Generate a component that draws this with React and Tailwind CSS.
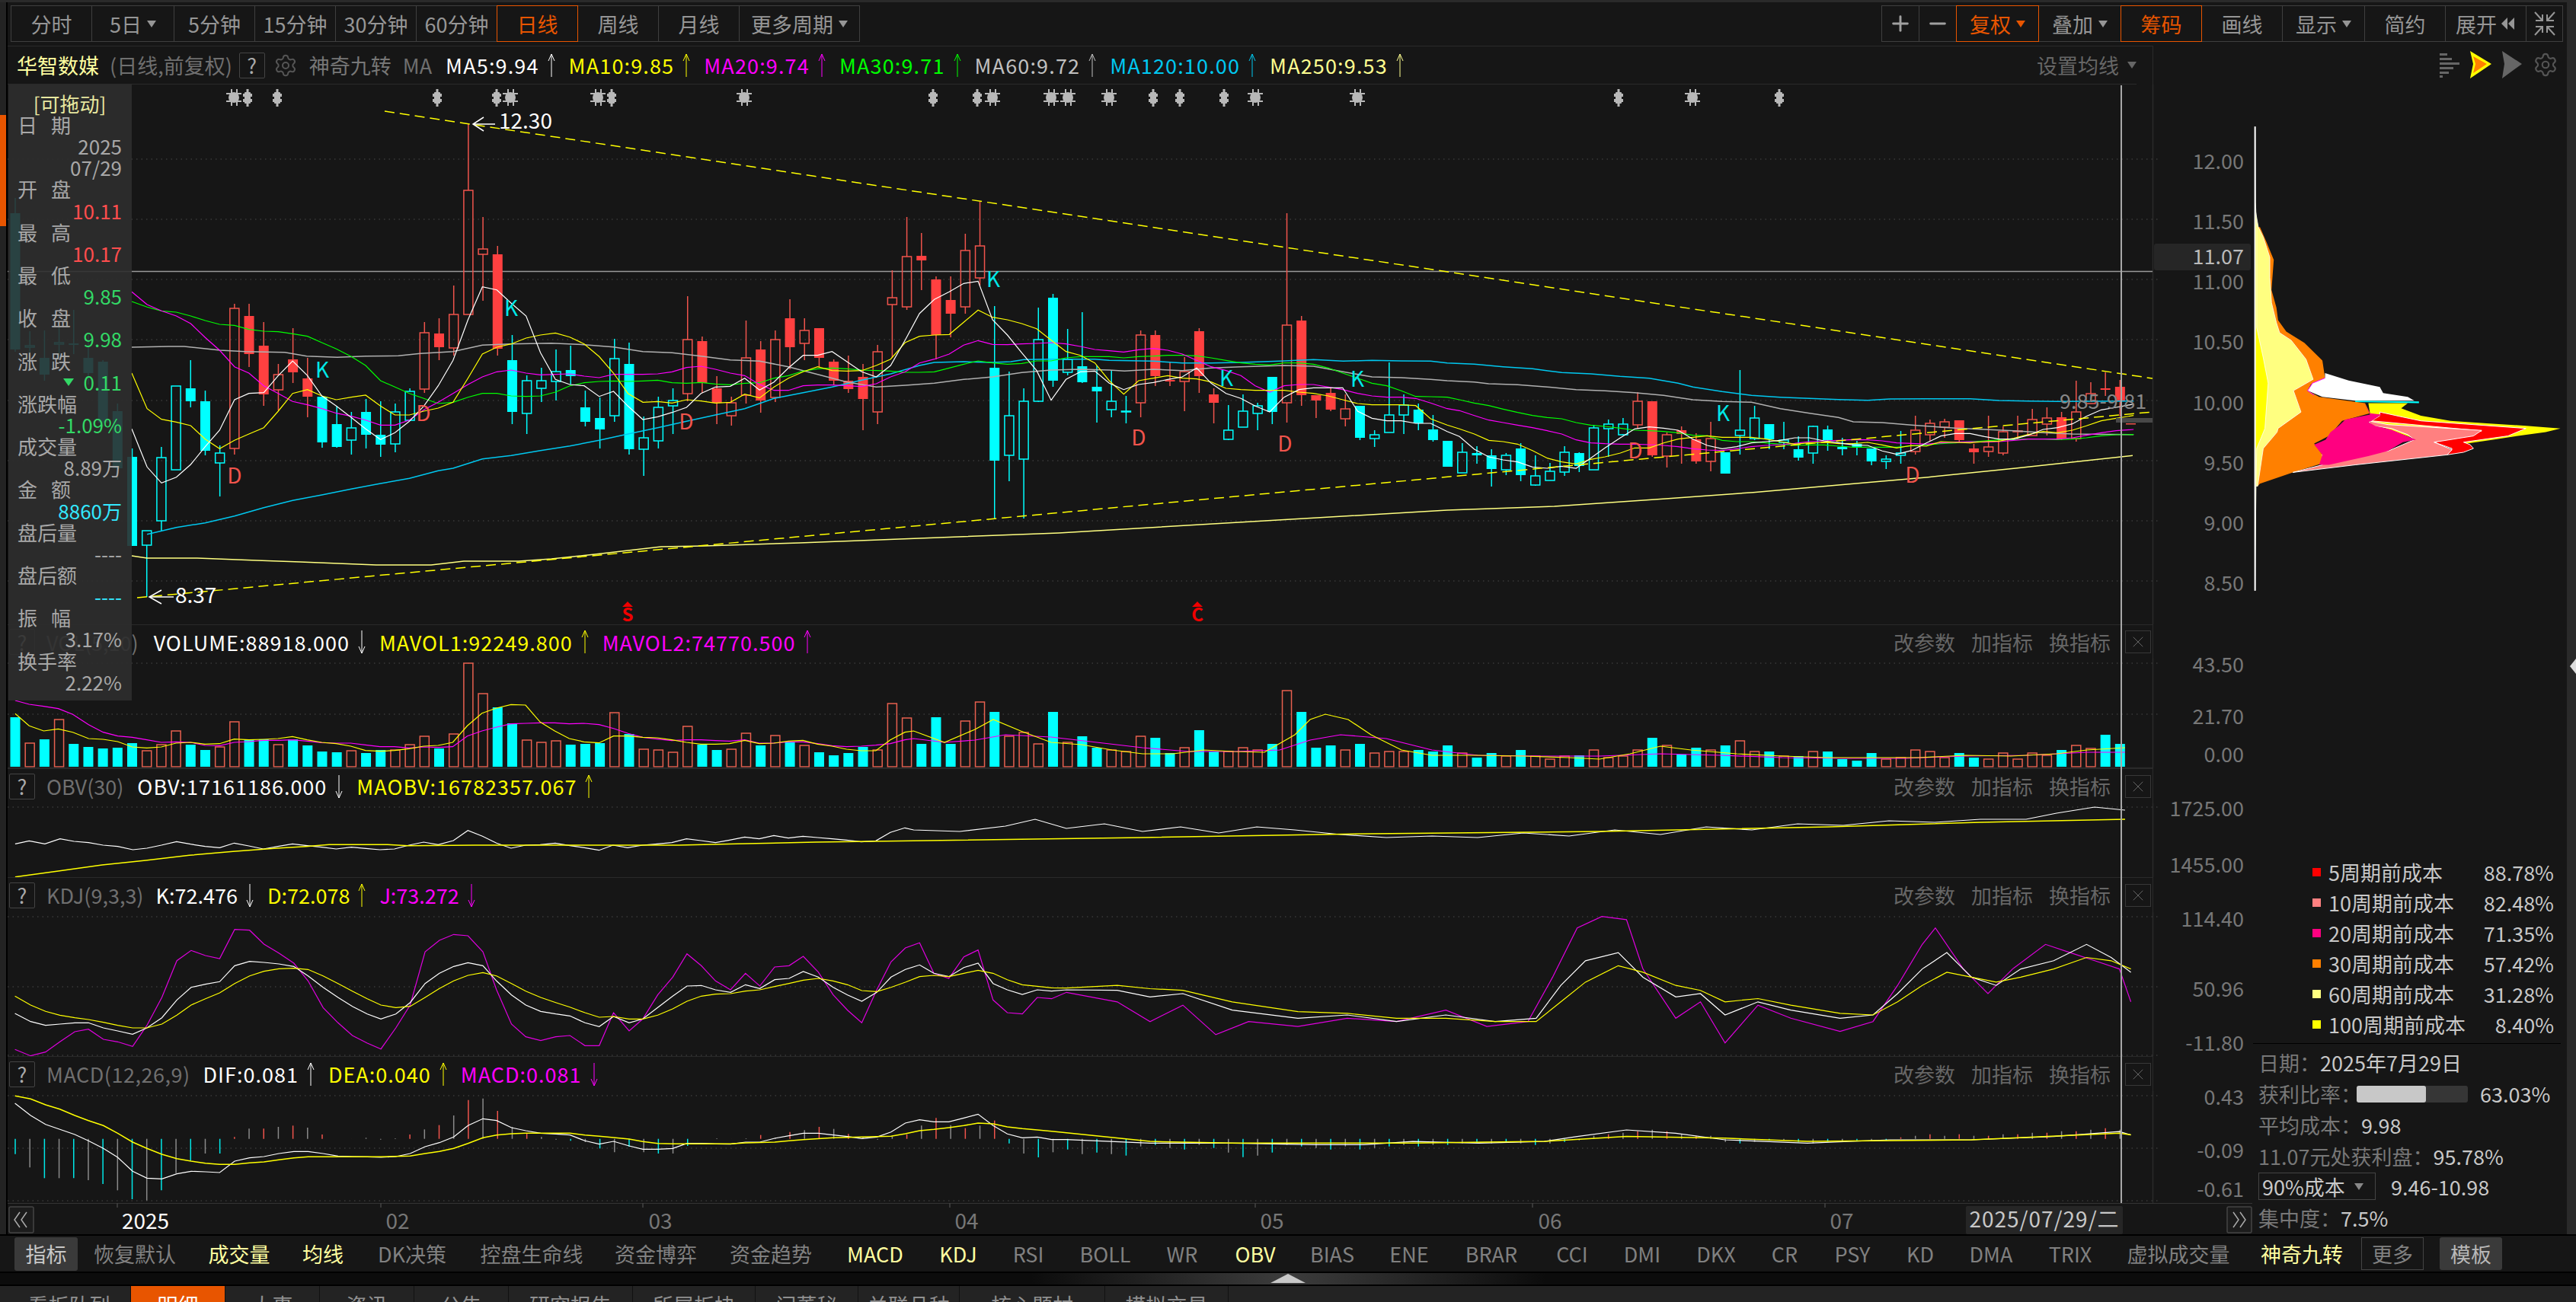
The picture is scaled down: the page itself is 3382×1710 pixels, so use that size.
import { Settings, X, Plus, Minus } from "lucide-react"

const conv = (s, ox, sx, oy, sy) =>
  s.trim().split(/\s+/).map(p => {
    const [a, b] = p.split(",")
    return (ox + a * sx).toFixed(1) + "," + (oy + b * sy).toFixed(1)
  }).join(" ")
const z8 = s => conv(s, 150, 0.574, 320, 1 / 3)
const z10 = s => conv(s, 1000, 0.574, 250, 1 / 3)
const z11 = s => conv(s, 1900, 0.574, 400, 1 / 3)
const z9 = s => conv(s, 0, 0.765, 820, 1 / 3)
const z12 = s => conv(s, 0, 0.893, 1150, 1 / 3)
const thumb = s => conv(s, 0, 2.157, 0, 2.157)
const chip = s => conv(s, 2700, 0.435, 300, 1 / 3)
const xi = i => 20 + 19.19 * i

const candles = [
  ["c",280,459,260,462],["o",454,456,435,476],["c",470,492,434,500],["o",450,452,430,470],["c",451,453,407,465],
  ["c",470,490,440,505],["c",475,555,473,560],["c",540,615,530,630],["c",600,717,589,717],["o",697,716,697,784],
  ["o",601,684,587,698],["o",507,617,507,617],["c",510,527,473,535],["c",527,592,513,598],["o",595,608,585,652],
  ["h",405,589,399,597],["f",415,465,399,482],["f",454,518,423,533],["h",492,512,478,539],["f",472,489,431,503],
  ["f",497,521,470,548],["c",521,581,521,588],["c",557,587,533,588],["o",562,578,541,597],["c",541,571,524,589],
  ["c",571,584,527,600],["o",541,583,530,594],["o",514,552,510,553],["h",437,511,423,516],["f",438,456,418,473],
  ["h",413,457,375,467],["h",250,413,163,413],["h",327,334,285,395],["f",334,458,323,467],["c",473,541,440,557],
  ["o",500,543,493,570],["o",500,510,483,528],["o",488,501,459,526],["c",486,494,454,505],["c",535,554,513,560],
  ["c",549,564,522,589],["o",471,546,445,554],["c",478,590,450,597],["o",575,590,547,625],["o",535,579,521,589],
  ["o",526,533,510,570],["h",446,517,389,527],["f",448,503,442,516],["f",510,529,494,557],["h",529,546,521,559],
  ["h",470,519,421,530],["f",459,526,448,542],["h",446,522,434,528],["f",418,456,393,485],["h",434,451,418,473],
  ["f",431,470,431,483],["f",475,500,472,506],["f",500,511,467,516],["f",495,524,478,565],["h",462,541,453,557],
  ["h",391,400,355,470],["h",337,403,285,407],["f",336,342,306,381],["f",367,440,363,472],["f",394,412,363,443],
  ["h",329,403,307,412],["h",323,365,265,375],["c",483,605,402,681],["o",546,598,488,632],["o",527,603,510,681],
  ["o",446,527,404,528],["c",391,500,386,508],["o",472,489,432,493],["c",481,502,410,503],["c",508,514,480,555],
  ["o",527,538,486,548],["o",540,541,520,556],["h",440,529,434,548],["f",440,494,434,507],["f",499,501,476,507],
  ["h",488,501,469,540],["f",435,494,431,516],["f",518,529,510,556],["o",565,577,532,578],["o",540,561,518,561],
  ["o",533,543,529,565],["c",495,541,495,557],["h",427,529,280,555],["f",421,519,415,533],["f",519,526,519,549],
  ["f",516,538,510,540],["h",537,550,518,560],["c",533,575,533,578],["o",571,576,565,587],["o",545,568,476,568],
  ["o",532,545,518,570],["c",538,556,530,565],["c",564,578,545,580],["c",579,613,579,613],["o",594,621,582,621],
  ["c",595,598,586,609],["c",598,616,590,639],["o",598,617,595,624],["c",589,624,582,632],["o",625,637,598,638],
  ["o",619,631,608,631],["o",594,620,586,625],["c",595,612,594,620],["o",562,617,558,617],["o",557,563,551,600],
  ["o",557,571,549,570],["h",527,558,515,563],["f",527,598,527,600],["h",571,599,568,614],["f",565,570,560,609],
  ["f",577,606,569,609],["h",576,606,554,619],["c",594,622,594,622],["o",565,572,486,597],["o",549,576,533,578],
  ["c",557,577,557,590],["o",578,581,554,590],["c",590,601,573,605],["o",560,595,559,609],["c",564,578,559,592],
  ["c",587,590,575,598],["c",583,587,579,598],["c",589,606,589,611],["o",603,606,598,616],["o",595,598,566,609],
  ["h",565,593,546,597],["h",556,571,551,579],["h",554,561,550,575],["f",552,578,552,581],["f",589,594,583,609],
  ["h",587,593,546,600],["h",567,595,560,598],["h",566,567,546,577],["h",551,572,537,572],["h",549,557,535,572],
  ["f",548,576,541,578],["h",541,576,500,580],["h",517,530,502,530],["f",510,512,489,520],["f",508,527,499,547],
]

const volH = [65,31,36,62,30,26,24,25,31,21,29,47,29,22,26,59,35,36,29,36,28,20,19,21,18,22,22,29,40,24,43,136,96,78,57,35,32,34,29,30,31,71,43,23,22,19,53,29,22,23,44,28,41,33,28,19,15,18,26,22,83,64,
  30,65,30,60,85,72,40,45,30,72,32,40,25,22,20,40,38,18,25,48,20,20,25,22,30,100,72,25,28,22,30,18,20,20,22,20,28,18,12,18,14,22,14,10,14,15,22,12,14,22,38,28,16,25,22,28,34,20,20,14,14,20,20,10,8,18,10,12,22,20,12,18,12,10,18,10,18,15,22,28,24,42,30]

const macdTail = [-14,-20,-18,-20,-22,-10,-8,-12,-14,-8,-12,-18,-24,-22,-18,-8,-10,-12,-14,-10,-14,-12,-10,-8,-10,-8,-8,-6,-4,-6,-4,-6,-8,-6,-4,-2,4,6,8,10,12,10,6,4,4,-4,-6,-4,-2,-2,-4,-6,-4,-4,-2,-2,-2,2,4,6,4,6,4,4,6,6,8,8,10,10,12,14,12]
const macdHead = [1097,1150,1192,1192,1192,1200,1215,1240,1275,1280,1240,1172,1122,1095,1095,1030,997,997,990,985,993,1020,1037,1037,1033,1040,1035,1020,1000,983,945,884,878,927,990,1015,1030,1040,1045,1050,1075,1090,1068,1090,1095,1095,1065,1037,1035,1037,1035,1022,1033,1010,1003,990,998,1018,1030,1040,1028,1020,985,955,983,995,985,965,1055,1095,1110,1090]

const ma5 = z8("40,730 75,880 108,943 142,920 175,870 208,800 241,735 275,615 308,590 342,587 375,520 408,462 442,520 475,600 508,640 542,685 575,730 609,772 642,745 675,700 708,640 741,560 775,460 809,300 842,170 875,182 908,235 942,285 975,430 1009,535 1042,555 1075,560 1109,602 1142,582 1175,640 1209,693 1243,682 1276,665 1309,645 1342,590 1375,565 1409,562 1442,530 1476,577 1509,545 1542,490") + " " +
  z10("95,650 128,650 161,635 195,675 229,715 262,735 295,690 328,590 361,485 395,430 429,400 462,367 495,358 528,510 562,570 595,640 629,710 662,827 696,745 729,715 762,712 795,760 828,785 862,765 896,757 929,745 962,735 995,700 1028,760 1062,800 1096,820 1129,850 1162,873 1195,815 1229,785 1262,778 1296,778 1329,778 1363,870 1396,898 1430,908 1463,908 1496,918 1530,918 1568,950") + " " +
  z11("28,520 62,570 95,600 128,612 161,620 195,640 229,645 262,637 295,645 328,605 361,565 396,525 429,490 462,482 495,487 528,495 562,530 595,555 629,568 662,560 696,545 729,540 762,535 795,525 828,525 862,537 896,545 929,553 962,555 995,577 1028,590 1062,575 1096,545 1129,518 1162,508 1196,508 1229,520 1262,530 1296,530 1329,515 1363,492 1396,485 1430,470 1462,440 1496,415 1530,405 1570,392")
const ma10 = z8("40,510 75,650 108,692 142,703 175,717 208,770 241,808 275,775 308,750 342,725 375,660 408,590 442,575 475,600 508,615 542,605 575,597 609,640 642,675 675,675 708,660 741,648 775,625 809,530 842,435 875,408 908,395 942,372 975,360 1009,352 1042,368 1075,395 1109,445 1142,510 1175,590 1209,625 1243,622 1276,628 1309,615 1342,620 1375,628 1409,625 1442,593 1476,608 1509,565 1542,530") + " " +
  z10("95,715 128,695 161,710 195,712 229,710 262,690 295,665 328,600 361,575 395,570 429,568 462,520 495,472 528,500 562,510 595,525 629,545 662,590 696,635 729,650 762,680 795,750 828,803 862,750 896,740 929,730 962,740 995,743 1028,755 1062,780 1096,785 1129,788 1162,788 1195,788 1229,795 1262,800 1296,810 1329,825 1363,840 1396,845 1430,845 1463,845 1496,848 1530,900 1568,925") + " " +
  z11("28,490 62,510 95,535 128,540 161,550 195,575 229,605 262,620 295,628 328,610 361,600 396,585 429,565 462,565 495,545 528,530 562,523 595,517 629,523 662,523 696,523 729,530 762,540 795,550 828,545 862,543 896,548 929,548 962,543 995,553 1028,565 1062,555 1096,558 1129,540 1162,543 1196,545 1229,540 1262,538 1296,527 1329,512 1363,500 1396,505 1430,495 1462,478 1496,458 1530,448 1570,437")
const ma20 = z8("40,190 75,240 108,265 142,285 175,315 208,370 241,420 275,485 308,510 342,560 375,590 408,622 442,635 475,650 508,668 542,680 575,695 609,715 642,715 675,695 708,655 741,625 775,590 809,555 842,525 875,505 908,498 942,510 975,517 1009,515 1042,513 1075,522 1109,528 1142,515 1175,515 1209,515 1243,513 1276,505 1309,488 1342,483 1375,495 1409,510 1442,520 1476,555 1509,578 1542,578") + " " +
  z10("95,770 128,767 161,767 195,770 229,773 262,762 295,735 328,715 361,680 395,665 429,645 462,610 495,592 528,607 562,608 595,605 629,603 662,600 696,605 729,615 762,627 795,632 828,637 862,628 896,623 929,630 962,645 995,670 1028,695 1062,710 1096,730 1129,770 1162,795 1195,770 1229,765 1262,765 1296,775 1329,785 1363,800 1396,810 1430,815 1463,815 1496,820 1530,838 1568,860") + " " +
  z11("28,418 62,437 95,455 128,465 161,475 195,485 229,497 262,510 295,533 328,545 361,548 396,550 429,550 462,552 495,555 528,560 562,568 595,573 629,575 662,568 696,560 729,555 762,552 795,547 828,540 862,537 896,535 929,532 962,533 995,537 1028,545 1062,547 1096,550 1129,545 1162,542 1196,540 1229,542 1262,540 1296,535 1329,530 1363,530 1396,530 1430,525 1462,515 1496,505 1530,497 1570,492")
const ma30 = z8("40,228 75,250 108,265 142,270 175,285 208,303 241,318 275,322 308,338 342,345 375,347 408,355 442,365 475,390 508,415 542,445 575,480 609,540 642,565 675,590 708,610 741,630 775,625 809,605 842,590 875,590 908,600 942,602 975,600 1009,585 1042,560 1075,548 1109,543 1142,541 1175,543 1209,541 1243,538 1276,548 1309,550 1342,547 1375,553 1409,556 1442,550 1476,548 1509,530 1542,520") + " " +
  z10("95,712 128,703 161,700 195,703 229,708 262,710 295,712 328,717 361,717 395,715 429,700 462,685 495,672 528,680 562,685 595,682 629,672 662,672 696,660 729,655 762,655 795,655 828,660 862,655 896,653 929,650 962,650 995,652 1028,660 1062,670 1096,680 1129,685 1162,688 1195,680 1229,680 1262,685 1296,700 1329,720 1363,740 1396,760 1430,770 1463,790 1496,812 1530,813 1568,815") + " " +
  z11("28,375 62,388 95,398 128,412 161,425 195,437 229,445 262,450 295,465 328,475 361,480 396,487 429,495 462,497 495,500 528,505 562,515 595,517 629,535 662,540 696,540 729,545 762,550 795,555 828,553 862,553 896,558 929,562 962,562 995,562 1028,562 1062,557 1096,553 1129,548 1162,545 1196,540 1229,537 1262,533 1296,532 1329,530 1363,530 1396,532 1430,530 1462,525 1496,517 1530,513 1570,512")
const ma60 = z8("40,408 125,405 160,405 242,420 300,425 390,428 440,443 510,448 575,443 650,442 700,433 775,425 842,400 905,395 1000,392 1075,398 1142,407 1209,425 1276,430 1342,443 1409,458 1476,463 1542,485") + " " +
  z10("128,725 195,755 262,775 329,768 395,760 462,745 528,735 595,718 662,708 729,705 795,708 830,712 896,705 962,710 1028,700 1096,695 1196,690 1262,693 1330,715 1396,735 1463,738 1530,745 1568,750") + " " +
  z11("62,305 95,312 161,316 229,325 295,335 361,340 429,347 495,358 562,375 629,382 696,385 762,410 829,428 895,445 929,462 995,465 1062,475 1162,487 1229,492 1296,497 1363,505 1430,510 1570,512")
const ma120 = z8("75,1145 142,1118 208,1100 275,1073 342,1040 408,1012 475,990 542,967 609,945 675,925 741,895 775,885 842,848 908,835 975,815 1042,797 1109,775 1175,750 1243,725 1309,700 1375,675 1442,650 1509,610") + " " +
  z10("95,797 161,775 229,748 295,723 361,690 395,678 462,675 528,678 570,675 600,667 662,665 762,665 795,670 895,673 962,680 1028,680 1096,678 1196,672 1262,667 1330,673 1396,670 1463,672 1530,673 1568,680") + " " +
  z11("62,235 128,245 195,253 262,268 329,273 395,283 462,290 528,310 562,325 629,343 696,358 762,365 829,370 895,374 962,377 1012,372 1096,371 1196,371 1262,378 1329,380 1396,382 1570,380")
const ma250 = "173,730 193,733 259,733 337,736 394,738 494,742 566,742 609,737 681,737 724,734 781,728 868,718 925,717 1050,713 1390,700 1900,670 " + z11("112,803 245,795 500,765 700,740 900,710 1100,680 1300,645 1568,595")

const stars = [[307,"s"],[325,"d"],[364,"d"],[574,"d"],[652,"d"],[670,"s"],[785,"s"],[803,"d"],[977,"s"],[1225,"d"],[1283,"d"],[1303,"s"],[1380,"s"],[1402,"s"],[1456,"s"],[1514,"d"],[1549,"d"],[1607,"d"],[1648,"s"],[1782,"s"],[2125,"d"],[2222,"s"],[2336,"d"]]
const marks = [["D",308,627],["K",423,488],["D",556,545],["K",671,407],["D",901,556],["K",1304,369],["D",1495,577],["K",1610,499],["D",1687,585],["K",1782,500],["D",2147,594],["K",2262,545],["D",2511,626]]

function Arrow({ up, className }) {
  return (
    <svg width="10" height="32" viewBox="0 0 10 32" fill="none" stroke="currentColor" strokeWidth="1" className={"shrink-0 " + className}>
      {up ? <path d="M5 1V31M1 10L5 1L9 10" /> : <path d="M5 1V31M1 22L5 31L9 22" />}
    </svg>
  )
}

function Caret({ className, ml = "ml-[7px]" }) {
  return <span className={"inline-block w-0 h-0 border-x-[6px] border-x-transparent border-t-[9px] " + ml + " " + className}></span>
}

function Line({ pts, color, w = 1.5, dash }) {
  return <polyline points={pts} fill="none" stroke={color} strokeWidth={w} strokeDasharray={dash} />
}

function Val({ text, color, up, tight, ma }) {
  const spacing = tight ? "" : ma ? "tracking-[1.15px]" : "tracking-[1px]"
  return (
    <div className={"flex items-center gap-[11px] mr-[18px] whitespace-nowrap " + color}>
      <span className={spacing}>{text}</span>
      <Arrow up={up} />
    </div>
  )
}

function Help() {
  return <div className="w-[34px] h-[34px] mr-[15px] shrink-0 flex items-center justify-center border border-[#444] rounded-[2px] text-[#aaa]">?</div>
}

function Tools() {
  return (
    <div className="ml-auto flex items-center text-[#666] mr-[2px]">
      <span className="mr-[21px]">改参数</span>
      <span className="mr-[21px]">加指标</span>
      <span className="mr-[19px]">换指标</span>
      <span className="w-[34px] h-[30px] flex items-center justify-center border border-[#383838]"><X size={24} strokeWidth={1} className="text-[#666]" /></span>
    </div>
  )
}

function PanelHead({ h, children }) {
  return (
    <div className={"w-[2817px] flex items-center pl-[2px] border-t border-r border-[#2a2a2a] " + h}>
      {children}
      <Tools />
    </div>
  )
}

function Chart({ y, h, grid = [], labels = [], children }) {
  return (
    <svg width="2947" height={h} viewBox={`10 ${y} 2947 ${h}`} className="block overflow-visible">
      {grid.map(g => <line key={g} x1="10" x2="2833" y1={g} y2={g} stroke="#3a3a3a" strokeWidth="1.5" strokeDasharray="1.5 5" />)}
      <line x1="2826.5" x2="2826.5" y1={y} y2={y + h} stroke="#2a2a2a" strokeWidth="1.5" />
      {children}
      {labels.map(([t, ly]) => <text key={t} x="2946" y={ly + 2} textAnchor="end" dominantBaseline="middle" fontSize="27" fill="#777">{t}</text>)}
    </svg>
  )
}

function PriceChart() {
  return (
    <Chart y={111} h={709} grid={[209,288,367,446,526,605,684,763]}
      labels={[["12.00",213],["11.50",292],["11.00",371],["10.50",450],["10.00",530],["9.50",609],["9.00",688],["8.50",767]]}>
      <rect x="2828" y="320" width="127" height="35" rx="3" fill="#262626" />
      <text x="2946" y="340" textAnchor="end" dominantBaseline="middle" fontSize="27" fill="#bbb">11.07</text>
      <line x1="10" x2="2826" y1="356.5" y2="356.5" stroke="#9a9a9a" strokeWidth="1.5" />
      {stars.map(([x, t]) => t === "s" ? (
        <g key={x} fill="#b8b8b8">
          <circle cx={x} cy="128" r="7" />
          <path d={`M${x - 10} 122h20v2h-20zM${x - 10} 132h20v2h-20zM${x - 4} 117h2v22h-2zM${x + 3} 117h2v22h-2z`} />
        </g>
      ) : (
        <g key={x} fill="#b8b8b8">
          <rect x={x - 4} y="121" width="8" height="15" rx="1" />
          <rect x={x - 1.5} y="117" width="3" height="23" />
          <rect x={x - 6} y="123" width="12" height="4" />
          <rect x={x - 6} y="130" width="12" height="4" />
        </g>
      ))}
      {candles.map(([t, top, bot, hi, lo], i) => {
        const x = xi(i)
        const red = t === "f" || t === "h"
        const c = red ? "#f0544c" : "#00ffff"
        const fill = t === "f" ? "#ff4040" : "#00ffff"
        return (
          <g key={i}>
            <line x1={x} x2={x} y1={hi} y2={top} stroke={c} strokeWidth="1.5" />
            <line x1={x} x2={x} y1={bot} y2={lo} stroke={c} strokeWidth="1.5" />
            {t === "f" || t === "c"
              ? <rect x={x - 6.5} y={top} width="13" height={Math.max(bot - top, 1.5)} fill={fill} />
              : <rect x={x - 6} y={top} width="12" height={Math.max(bot - top, 1)} fill="none" stroke={c} strokeWidth="1.5" />}
          </g>
        )
      })}
      <Line pts={ma250} color="#ffff80" w={1.5} />
      <Line pts={ma120} color="#00c8f0" w={1.5} />
      <Line pts={ma60} color="#b0b0b0" w={1.5} />
      <Line pts={ma30} color="#00ff00" w={1.2} />
      <Line pts={ma20} color="#ff00ff" w={1.2} />
      <Line pts={ma10} color="#ffff00" w={1.2} />
      <Line pts={ma5} color="#ffffff" w={1.2} />
      <Line pts="505,146 2826,497" color="#ffff00" w={1.5} dash="13 7" />
      <Line pts="180,785 2826,541" color="#ffff00" w={1.5} dash="13 7" />
      <path d="M650 163H621M635 154L621 163L635 172M228 784H196M212 775L196 784L212 793" fill="none" stroke="#fff" strokeWidth="1.5" />
      <text x="655" y="161" dominantBaseline="middle" fontSize="28" fill="#fff">12.30</text>
      <text x="230" y="784" dominantBaseline="middle" fontSize="28" fill="#fff">8.37</text>
      {marks.map(([t, x, y]) => (
        <text key={x} x={x} y={y} textAnchor="middle" dominantBaseline="middle" fontSize="28" fill={t === "K" ? "#00e8e8" : "#f0544c"}>{t}</text>
      ))}
      <path d="M817 797L824 790L831 797ZM1565 797L1572 790L1579 797Z" fill="#f00000" />
      <text x="824" y="809" textAnchor="middle" dominantBaseline="middle" fontSize="24" fontWeight="700" fill="#f00000">S</text>
      <text x="1572" y="809" textAnchor="middle" dominantBaseline="middle" fontSize="24" fontWeight="700" fill="#f00000">C</text>
      <text x="2704" y="530" dominantBaseline="middle" fontSize="27" fill="#888">9.85-9.81</text>
      <rect x="2778" y="549" width="48" height="6" fill="#484848" />
      <rect x="2791" y="556" width="13" height="1.5" fill="#f0544c" />
    </Chart>
  )
}

function VolChart() {
  return (
    <Chart y={865} h={144} grid={[871,938]} labels={[["43.50",874],["21.70",942],["0.00",992]]}>
      {volH.map((v, i) => {
        const t = candles[i][0]
        const solid = t === "c" || t === "f"
        return solid
          ? <rect key={i} x={xi(i) - 6.5} y={1007 - v} width="13" height={v} fill="#00ffff" />
          : <rect key={i} x={xi(i) - 6} y={1007 - v} width="12" height={v} fill="none" stroke="#e8604f" strokeWidth="1.5" />
      })}
      <line x1="10" x2="2826" y1="1008.5" y2="1008.5" stroke="#2a2a2a" strokeWidth="1.5" />
      <Line pts={z9("26,300 50,315 75,323 100,332 125,355 152,395 177,425 202,440 227,445 252,455 277,465 302,463 327,465 352,477 377,478 402,465 427,462 452,457 477,457 502,455 527,460 552,466 577,468 602,468 627,475 652,482 677,482 702,487 727,483 752,485 777,482 802,440 827,420 852,405 877,392 902,390 927,388 952,388 977,392 1002,390 1028,395 1053,410 1078,430 1103,445 1128,452 1153,458 1178,455 1203,455 1228,458 1252,460 1278,455 1303,468 1328,468 1353,463 1378,463 1403,470 1428,478 1453,482 1478,480 1503,476 1528,470 1553,455 1568,450") + " 1240,975 1280,972 1320,965 1380,968 1440,975 1500,982 1560,987 1620,987 1680,985 1720,972 1760,965 1820,970 1880,985 1940,992 2020,993 2100,993 2180,990 2260,992 2340,995 2420,996 2500,996 2580,993 2660,992 2740,988 2790,988"} color="#ff00ff" w={1.2} />
      <Line pts={z9("26,352 50,400 75,420 100,412 125,425 152,450 177,453 202,462 227,483 252,487 277,483 302,468 327,465 352,472 377,470 402,452 427,455 452,453 477,450 502,442 527,455 552,465 577,470 602,480 627,497 652,500 677,497 702,490 727,480 752,477 777,465 802,400 827,350 852,330 877,316 902,318 927,385 952,420 977,450 1002,463 1028,467 1053,440 1078,440 1103,445 1128,447 1153,455 1178,465 1203,472 1228,472 1252,470 1278,457 1303,470 1328,468 1353,460 1378,457 1403,472 1428,480 1453,492 1478,498 1503,498 1528,455 1553,425 1568,420") + " 1240,975 1280,958 1304,945 1340,960 1380,975 1420,978 1460,985 1500,990 1540,990 1580,985 1620,987 1660,988 1700,965 1720,945 1740,938 1770,945 1800,965 1840,985 1880,992 1940,992 2000,993 2060,995 2100,997 2140,990 2180,980 2220,985 2280,990 2340,993 2400,995 2460,995 2520,995 2580,992 2640,993 2700,990 2740,985 2790,982"} color="#ffff00" w={1.2} />
    </Chart>
  )
}

function ObvChart() {
  return (
    <Chart y={1055} h={97} grid={[1060]} labels={[["1725.00",1063],["1455.00",1137]]}>
      <Line pts={z9("26,865 50,853 77,865 103,845 127,855 152,860 177,870 202,875 228,888 252,882 277,870 303,856 327,866 352,875 377,880 402,862 427,873 452,885 477,875 502,865 527,872 552,878 577,885 603,878 628,883 652,888 677,885 702,870 727,858 752,868 778,852 803,812 828,835 852,862 877,882 902,870 927,868 953,862 978,872 1003,880 1028,890 1052,870 1077,880 1103,870 1128,865 1153,860 1178,845 1203,852 1228,860 1252,850 1278,838 1303,845 1328,832 1353,842 1378,835 1403,840 1428,845 1453,850 1478,857 1503,853 1528,820 1553,802 1568,810") + " 1260,1092 1320,1085 1359,1076 1400,1088 1450,1082 1500,1092 1550,1086 1600,1094 1650,1086 1700,1090 1760,1096 1820,1100 1880,1098 1940,1100 2000,1094 2060,1098 2120,1090 2180,1096 2240,1086 2300,1090 2360,1082 2420,1084 2480,1078 2540,1080 2600,1076 2660,1076 2700,1068 2750,1060 2790,1064"} color="#fff" w={1.2} />
      <Line pts={z9("26,995 100,972 175,948 250,930 325,910 400,895 475,882 525,875 565,868 665,868 700,872 815,870 900,870 1000,870 1165,870 1265,865 1400,858 1568,853") + " 1500,1100 1800,1095 2100,1092 2400,1086 2600,1080 2790,1076"} color="#ffff00" w={1.5} />
    </Chart>
  )
}

function KdjChart() {
  return (
    <Chart y={1198} h={189} grid={[1204,1296,1386]} labels={[["114.40",1208],["50.96",1300],["-11.80",1371]]}>
      <Line pts={z12("22,685 45,710 67,695 88,655 110,615 130,605 152,645 173,655 195,673 216,590 238,480 260,335 281,295 302,315 323,327 345,212 367,215 388,270 410,305 432,345 453,415 475,520 497,580 518,630 540,660 560,683 582,600 603,510 625,300 646,255 667,232 688,237 710,300 730,450 752,585 773,635 795,650 817,635 838,630 860,670 881,670 902,540 925,612 945,565 967,470 989,400 1010,308 1031,355 1052,415 1074,450 1096,385 1117,435 1139,360 1160,355 1181,318 1203,380 1225,470 1246,530 1267,580 1289,450 1310,340 1331,285 1352,265 1373,385 1395,405 1417,320 1438,293 1460,490 1481,540 1503,545 1525,480 1546,485 1568,460") + " " + thumb("680,610 700,622 720,612 740,630 760,622 790,625 820,620 850,622 880,615 905,625 930,622 945,595 960,565 975,558 990,560 1000,590 1020,620 1035,610 1050,635 1070,612 1090,620 1120,628 1140,622 1155,600 1170,575 1178,565 1195,590 1210,605 1225,590 1245,575 1260,580 1275,585 1290,590 1297,610")} color="#e000e0" w={1.2} />
      <Line pts={z12("22,543 45,575 67,590 88,585 110,580 130,580 152,600 173,612 195,625 216,600 238,560 260,490 281,440 302,428 323,418 345,355 367,338 388,342 410,348 432,358 453,395 475,440 497,480 518,515 540,545 560,565 582,545 603,500 625,425 646,385 667,358 688,343 710,355 730,415 752,470 773,510 795,535 817,545 838,553 860,580 881,595 902,555 925,580 945,565 967,520 989,475 1010,435 1031,433 1052,450 1074,460 1096,430 1117,445 1139,410 1160,405 1181,378 1203,400 1225,440 1246,470 1267,495 1289,460 1310,400 1331,370 1352,352 1373,385 1395,398 1417,362 1438,345 1460,425 1481,450 1503,468 1525,450 1546,455 1568,450") + " " + thumb("680,603 700,607 720,605 750,615 790,620 820,618 850,622 880,618 910,622 935,620 950,600 965,585 985,580 1000,595 1020,607 1035,605 1050,618 1070,610 1090,615 1120,620 1140,618 1155,605 1170,590 1185,580 1200,595 1215,600 1230,590 1250,585 1270,575 1285,583 1297,592")} color="#fff" w={1.2} />
      <Line pts={z12("22,475 45,510 67,535 88,550 110,560 130,567 152,578 173,590 195,600 216,600 238,585 260,550 281,510 302,485 323,462 345,425 367,395 388,377 410,367 432,365 453,370 475,395 497,425 518,455 540,485 560,510 582,520 603,515 625,480 646,445 667,415 688,393 710,382 730,395 752,425 773,455 795,480 817,500 838,518 860,540 881,558 902,555 925,565 945,565 967,550 989,525 1010,495 1031,475 1052,467 1074,465 1096,455 1117,450 1139,437 1160,425 1181,412 1203,405 1225,415 1246,430 1267,453 1289,457 1310,440 1331,420 1352,398 1373,393 1395,398 1417,385 1438,373 1460,385 1481,410 1503,430 1525,436 1546,442 1568,443") + " " + thumb("680,600 700,602 720,603 750,610 790,616 820,617 850,620 880,620 910,622 935,622 950,610 965,598 985,588 1000,592 1020,600 1035,603 1050,610 1070,608 1090,612 1120,617 1140,618 1155,610 1170,600 1185,592 1200,595 1215,598 1230,595 1250,590 1270,583 1285,585 1297,590")} color="#ffff00" w={1.2} />
    </Chart>
  )
}

function MacdChart() {
  const base = 1495.7
  return (
    <Chart y={1433} h={147} grid={[1439,1508,1577]} labels={[["0.43",1442],["-0.09",1512],["-0.61",1563]]}>
      {macdHead.map((z, i) => {
        const y = 1150 + z / 3
        const down = y > base
        return <line key={i} x1={xi(i)} x2={xi(i)} y1={base} y2={y} strokeWidth="1.5" stroke={down ? (i % 2 ? "#8a8a8a" : "#00e8e8") : (i % 2 ? "#f0544c" : "#8a8a8a")} />
      })}
      {macdTail.map((v, n) => {
        const i = n + 72
        return <line key={i} x1={xi(i)} x2={xi(i)} y1={base} y2={base - v} strokeWidth="1.5" stroke={v < 0 ? (i % 2 ? "#8a8a8a" : "#00e8e8") : (i % 2 ? "#f0544c" : "#8a8a8a")} />
      })}
      <Line pts={z12("22,897 45,945 67,980 88,1000 110,1020 130,1045 152,1075 173,1110 195,1165 216,1192 238,1195 260,1175 281,1165 302,1167 323,1170 345,1125 367,1112 388,1107 410,1095 432,1087 453,1087 475,1095 497,1105 518,1107 540,1108 560,1110 582,1107 603,1095 625,1068 646,1052 667,1030 688,985 710,958 730,965 752,993 773,1005 795,1015 817,1018 838,1022 860,1045 881,1058 902,1047 925,1065 945,1078 967,1078 989,1075 1010,1055 1031,1055 1052,1057 1074,1058 1096,1050 1117,1050 1139,1035 1160,1025 1181,1015 1203,1015 1225,1022 1246,1028 1267,1036 1289,1030 1310,1010 1331,975 1352,962 1373,970 1395,970 1417,955 1438,940 1460,985 1481,1018 1503,1033 1525,1030 1546,1040 1568,1040") + " " + thumb("700,696 750,696 800,697 830,697 860,695 900,696 940,695 960,692 990,688 1020,690 1050,694 1100,696 1150,694 1200,694 1250,692 1290,689 1297,691")} color="#fff" w={1.2} />
      <Line pts={z12("22,868 45,880 67,903 88,920 110,945 130,965 152,985 173,1015 195,1050 216,1075 238,1098 260,1115 281,1125 302,1133 323,1138 345,1138 367,1132 388,1128 410,1120 432,1112 453,1108 475,1108 497,1108 518,1108 560,1108 603,1105 625,1095 646,1087 667,1075 688,1055 710,1033 730,1022 752,1017 773,1015 795,1015 838,1015 860,1022 881,1027 902,1032 925,1038 945,1048 967,1055 989,1057 1010,1057 1052,1057 1074,1057 1096,1053 1139,1050 1160,1045 1181,1040 1225,1033 1267,1030 1310,1027 1331,1017 1352,1005 1373,1000 1395,993 1417,985 1438,975 1460,978 1481,990 1503,997 1525,1002 1546,1007 1568,1013") + " " + thumb("700,695 750,696 800,696 860,696 940,695 990,692 1050,693 1100,695 1200,694 1290,690 1297,691")} color="#ffff00" w={1.5} />
    </Chart>
  )
}

function DateAxis() {
  const ticks = [154,500,844,1247,1648,2012,2396]
  const labels = [["02",522],["03",867],["04",1269],["05",1670],["06",2035],["07",2418]]
  return (
    <svg width="2947" height="41" viewBox="10 1580 2947 41" className="block">
      <line x1="10" x2="2957" y1="1580" y2="1580" stroke="#333" strokeWidth="2" />
      {ticks.map(t => <line key={t} x1={t} x2={t} y1="1580" y2="1586" stroke="#444" strokeWidth="1.5" />)}
      <rect x="12" y="1585" width="32" height="34" rx="2" fill="#1c1c1c" stroke="#444" strokeWidth="1.5" />
      <path d="M26 1592L19 1602L26 1612M35 1592L28 1602L35 1612" fill="none" stroke="#aaa" strokeWidth="1.5" />
      <rect x="2924" y="1585" width="32" height="34" rx="2" fill="#1c1c1c" stroke="#444" strokeWidth="1.5" />
      <path d="M2932 1592L2939 1602L2932 1612M2941 1592L2948 1602L2941 1612" fill="none" stroke="#aaa" strokeWidth="1.5" />
      <text x="191" y="1606" textAnchor="middle" dominantBaseline="middle" fontSize="28" fill="#fff">2025</text>
      {labels.map(([t, x]) => <text key={t} x={x} y="1606" textAnchor="middle" dominantBaseline="middle" fontSize="28" fill="#777">{t}</text>)}
      <rect x="2581" y="1584" width="206" height="37" rx="2" fill="#262626" />
      <text x="2684" y="1604" textAnchor="middle" dominantBaseline="middle" fontSize="28" letterSpacing="1" fill="#c8c8c8">2025/07/29/二</text>
    </svg>
  )
}

function ChipChart() {
  return (
    <svg width="413" height="1025" viewBox="2957 110 413 1025" className="block">
      <polygon points={chip("940,700 1060,700 1040,720 1100,750 1190,770 1300,780 1420,790 1525,800 1480,815 1395,830 1320,845 1240,860 1100,850 950,780")} fill="#ffff00" />
      <polygon points={chip("597,0 610,0 630,60 652,130 645,250 660,320 665,370 690,415 745,460 800,530 808,600 765,625 755,650 790,675 930,700 945,740 860,770 840,800 820,830 775,860 800,905 798,940 710,975 610,1020 603,1030 597,1030")} fill="#ff8000" />
      <polygon points={chip("597,-60 605,0 620,40 640,120 640,200 645,300 660,380 670,420 705,450 750,525 772,605 712,650 735,735 665,800 662,815 620,880 603,1030 597,1030")} fill="#ffff80" stroke="#fff" strokeWidth="0.8" />
      <polygon points={chip("595,-400 596,-100 600,0 600,400 620,520 635,620 625,800 600,880 598,1030 597,1130 595,1445")} fill="#ffff00" stroke="#fff" strokeWidth="0.8" />
      <polygon points={chip("808,580 880,610 975,635 985,660 1060,675 1080,690 900,690 800,675 755,650 770,620 808,600")} fill="#ffffff" />
      <polyline points={chip("808,600 770,620 755,650 775,668")} fill="none" stroke="#ff00ff" strokeWidth="1" />
      <polygon points={chip("900,690 1094,693 1094,700 900,695")} fill="#00ffff" />
      <polygon points={chip("975,735 1045,755 1100,770 1420,800 1365,830 1230,855 1250,865 1260,880 1230,895 1180,905 1195,880 1140,855 1285,810 950,770 975,750")} fill="#ff0000" stroke="#fff" strokeWidth="1" />
      <polygon points={chip("940,770 1000,785 1285,808 1260,830 1140,855 1195,885 1180,905 900,945 710,975 800,945 800,900 1000,890 1080,845 1060,825 1010,800 950,790")} fill="#ff8080" stroke="#fff" strokeWidth="1" />
      <polygon points={chip("928,700 945,740 980,745 950,770 940,775 960,790 1010,805 1085,845 1045,855 1000,890 940,910 820,945 790,945 800,905 775,865 810,845 825,815 850,790 870,765 945,745")} fill="#ff0080" />
      <polyline points={chip("595,-400 595,1445")} fill="none" stroke="#fff" strokeWidth="2" />
    </svg>
  )
}

const legend = [["#ff0000","5周期前成本","88.78%"],["#ff8080","10周期前成本","82.48%"],["#ff0080","20周期前成本","71.35%"],["#ff8000","30周期前成本","57.42%"],["#ffff80","60周期前成本","31.28%"],["#ffff00","100周期前成本","8.40%"]]

function ChipPanel() {
  return (
    <div className="w-[413px] flex flex-col text-[27px]">
      <div className="h-[50px] flex items-center justify-end pr-[11px] gap-[14px]">
        <svg width="26" height="34" viewBox="0 0 26 34" fill="#666"><path d="M0 2h10v3H0zM0 8h16v3H0zM0 14h26v3H0zM0 20h18v3H0zM0 26h12v3H0zM0 31h4v3H0z" /></svg>
        <svg width="28" height="36" viewBox="0 0 28 36"><path d="M0 0L28 17L0 36L4 17Z" fill="#ffff00" /><path d="M4 7L22 17L4 29L7 17Z" fill="#ff8000" /></svg>
        <svg width="26" height="36" viewBox="0 0 26 36" fill="#666"><path d="M0 0L26 17L0 36L3 17Z" /></svg>
        <Settings size={34} strokeWidth={1.5} className="text-[#555]" />
      </div>
      <ChipChart />
      <div className="flex flex-col">
        {legend.map(([c, t, v]) => (
          <div key={t} className="h-[40.1px] flex items-center pl-[79px] pr-[17px] text-[#c8c8c8]">
            <span className={"w-[11px] h-[11px] mr-[10px]"} style={{ background: c }}></span>
            <span>{t}</span>
            <span className="ml-auto">{v}</span>
          </div>
        ))}
      </div>
      <div className="h-px bg-black mt-[4px] mx-[1px] w-[404px]"></div>
      <div className="flex flex-col pl-[8px]">
        <div className="h-[41px] flex items-center mt-[4px]"><span className="text-[#777]">日期：</span><span className="text-[#c8c8c8]">2025年7月29日</span></div>
        <div className="h-[41px] flex items-center">
          <span className="text-[#777]">获利比率：</span>
          <div className="w-[146px] h-[22px] bg-[#363636] rounded-[3px] flex -ml-[6px]"><div className="w-[91px] h-full bg-[#c8c8c8] rounded-[3px]"></div></div>
          <span className="text-[#c8c8c8] ml-[16px]">63.03%</span>
        </div>
        <div className="h-[41px] flex items-center"><span className="text-[#777]">平均成本：</span><span className="text-[#c8c8c8]">9.98</span></div>
        <div className="h-[41px] flex items-center"><span className="text-[#777]">11.07元处获利盘：</span><span className="text-[#c8c8c8]">95.78%</span></div>
        <div className="h-[38px] flex items-center">
          <div className="w-[154px] h-[36px] border border-[#444] flex items-center pl-[4px] text-[#c8c8c8]">90%成本<Caret className="border-t-[#888]" ml="ml-[12px]" /></div>
          <span className="text-[#c8c8c8] ml-[20px]">9.46-10.98</span>
        </div>
        <div className="h-[44px] flex items-center"><span className="text-[#777]">集中度：</span><span className="text-[#c8c8c8]">7.5%</span></div>
      </div>
    </div>
  )
}

const info = [
  ["l","日","期"],["v","2025"],["v","07/29"],["l","开","盘"],["v","10.11","text-[#ff4d4d]"],["l","最","高"],["v","10.17","text-[#ff4d4d]"],["l","最","低"],["v","9.85","text-[#33d966]"],
  ["l","收","盘"],["v","9.98","text-[#33d966]"],["l","涨","跌"],["t","0.11","text-[#33d966]"],["m","涨跌幅"],["v","-1.09%","text-[#33d966]"],["m","成交量"],["v","8.89万"],["l","金","额"],["v","8860万","text-[#33e8ff]"],
  ["m","盘后量"],["v","----"],["m","盘后额"],["v","----","text-[#33e8ff]"],["l","振","幅"],["v","3.17%"],["m","换手率"],["v","2.22%"],
]

function DataWindow() {
  return (
    <div className="absolute left-[11px] top-[111px] w-[162px] h-[809px] bg-[#2d2d2d]/90 flex flex-col pl-[12px] pr-[13px] pt-[11px] text-[26px] text-[#a8a8a8]">
      <div className="h-[28px] leading-[28px] text-center text-[#e8e8a0]">[可拖动]</div>
      {info.map(([k, a, b], n) => (
        k === "l" ? (
          <div key={n} className="h-[28.15px] leading-[28px] w-[70px] flex justify-between"><span>{a}</span><span>{b}</span></div>
        ) : k === "m" ? (
          <div key={n} className="h-[28.15px] leading-[28px]">{a}</div>
        ) : (
          <div key={n} className={"h-[28.15px] leading-[28px] flex items-center justify-end " + (b || "")}>
            {k === "t" && <span className="w-0 h-0 mr-[12px] border-x-[7px] border-x-transparent border-t-[10px] border-t-[#33d966]"></span>}
            {a}
          </div>
        )
      ))}
    </div>
  )
}

const leftBtns = [["分时",107],["5日",109,1],["5分钟",107],["15分钟",107],["30分钟",107],["60分钟",107],["日线",107,0,1],["周线",107],["月线",107],["更多周期",159,1]]
const rightBtns = [["plus",50],["minus",50],["复权",109,1,1],["叠加",109,1],["筹码",107,0,1],["画线",107],["显示",109,1],["简约",107],["展开",107],["",49]]

function Btn({ label, w, caret, active }) {
  return (
    <div style={{ width: w }} className={"-ml-px h-[48px] flex items-center justify-center border whitespace-nowrap " + (active ? "relative border-[#e85500] text-[#e85500]" : "border-[#3f3f3f] text-[#969696]")}>
      {label === "展开" ? (
        <>
          <span>展开</span>
          <svg width="20" height="20" viewBox="0 0 20 20" fill="#969696" className="ml-[5px]"><path d="M9 2L1 10L9 18ZM18 2L10 10L18 18Z" /></svg>
        </>
      ) : label === "" ? (
        <svg width="30" height="34" viewBox="0 0 30 34" fill="none" stroke="#969696" strokeWidth="2"><path d="M2 2L12 13M12 5V13H3M28 2L18 13M18 5V13H27M2 32L12 21M12 29V21H3M28 32L18 21M18 29V21H27" /></svg>
      ) : label === "plus" ? (
        <Plus size={32} strokeWidth={2.2} className="text-[#a0a0a0]" />
      ) : label === "minus" ? (
        <Minus size={32} strokeWidth={2.2} className="text-[#a0a0a0]" />
      ) : (
        <span>{label}</span>
      )}
      {caret ? <Caret className={active ? "border-t-[#e85500]" : "border-t-[#969696]"} /> : null}
    </div>
  )
}

const tabs = [["恢复默认",150],["成交量",124,1],["均线",96,1],["DK决策",138],["控盘生命线",176],["资金博弈",150],["资金趋势",152],["MACD",122,1],["KDJ",96,1],["RSI",88],["BOLL",114],["WR",88],["OBV",104,1],["BIAS",98],["ENE",104],["BRAR",112],["CCI",100],["DMI",84],["DKX",110],["CR",70],["PSY",108],["KD",70],["DMA",116],["TRIX",92],["虚拟成交量",192],["神奇九转",132,1]]
const bottomTabs = [["看板队列",162],["明细",124,1],["大事",124],["资讯",124],["公告",124],["研究报告",163],["所属板块",161],["问董秘",135],["关联品种",133],["核心题材",191],["模拟交易",162]]

export default function App() {
  return (
    <div className="relative w-[3382px] h-[1710px] overflow-hidden bg-[#161616] flex flex-col text-[27px] leading-none font-['Noto_Sans_CJK_SC','Noto_Sans',sans-serif]">
      <div className="h-[3px] bg-[#2a2a2a]"></div>
      <div className="flex h-[1618px]">
        <div className="w-[10px] bg-[#232323] border-r-2 border-black pt-[148px]">
          <div className="w-[8px] h-[146px] bg-[#e85500]"></div>
        </div>
        <div className="w-[3360px] flex flex-col">
          <div className="h-[57px] pt-[4px] pl-[5px] pr-[5px] flex justify-between">
            <div className="flex">{leftBtns.map(([l, w, c, a]) => <Btn key={l} label={l} w={w} caret={c} active={a} />)}</div>
            <div className="flex">{rightBtns.map(([l, w, c, a]) => <Btn key={l} label={l} w={w} caret={c} active={a} />)}</div>
          </div>
          <div className="flex h-[1561px]">
            <div className="w-[2947px] flex flex-col">
              <div className="h-[51px] w-[2817px] border-t border-r border-[#2a2a2a]">
                <div className="h-[50px] w-[2795px] flex items-center pl-[12px] border-b border-[#2a2a2a]">
                  <span className="text-[#ffffa0] mr-[14px]">华智数媒</span>
                  <span className="text-[#6f6f6f] mr-[9px]">(日线,前复权)</span>
                  <Help />
                  <Settings size={32} strokeWidth={1.5} className="text-[#555] -ml-[4px] mr-[15px]" />
                  <span className="text-[#777] mr-[15px]">神奇九转</span>
                  <span className="text-[#6f6f6f] mr-[18px]">MA</span>
                  <Val text="MA5:9.94" color="text-white" up ma />
                  <Val text="MA10:9.85" color="text-[#ffff00]" up ma />
                  <Val text="MA20:9.74" color="text-[#ff00ff]" up ma />
                  <Val text="MA30:9.71" color="text-[#00ff00]" up ma />
                  <Val text="MA60:9.72" color="text-[#c0c0c0]" up ma />
                  <Val text="MA120:10.00" color="text-[#00c8f0]" up ma />
                  <Val text="MA250:9.53" color="text-[#ffff90]" up ma />
                  <span className="ml-auto text-[#666]">设置均线</span>
                  <Caret className="border-t-[#666]" ml="ml-[11px]" />
                </div>
              </div>
              <PriceChart />
              <PanelHead h="h-[45px]">
                <Help />
                <span className="text-[#6f6f6f] mr-[20px]">VOL(5,10)</span>
                <Val text="VOLUME:88918.000" color="text-white" />
                <Val text="MAVOL1:92249.800" color="text-[#ffff00]" up />
                <Val text="MAVOL2:74770.500" color="text-[#ff00ff]" up />
              </PanelHead>
              <VolChart />
              <PanelHead h="h-[46px]">
                <Help />
                <span className="text-[#6f6f6f] mr-[18px]">OBV(30)</span>
                <Val text="OBV:17161186.000" color="text-white" />
                <Val text="MAOBV:16782357.067" color="text-[#ffff00]" up />
              </PanelHead>
              <ObvChart />
              <PanelHead h="h-[46px]">
                <Help />
                <span className="text-[#6f6f6f] mr-[16px]">KDJ(9,3,3)</span>
                <Val text="K:72.476" color="text-white" tight />
                <Val text="D:72.078" color="text-[#ffff00]" up tight />
                <Val text="J:73.272" color="text-[#ff00ff]" tight />
              </PanelHead>
              <KdjChart />
              <PanelHead h="h-[46px]">
                <Help />
                <span className="text-[#6f6f6f] tracking-[0.5px] mr-[17px]">MACD(12,26,9)</span>
                <Val text="DIF:0.081" color="text-white" up />
                <Val text="DEA:0.040" color="text-[#ffff00]" up />
                <Val text="MACD:0.081" color="text-[#ff00ff]" />
              </PanelHead>
              <MacdChart />
              <DateAxis />
            </div>
            <ChipPanel />
          </div>
        </div>
        <div className="w-[12px] bg-[#2a2a2a] pt-[862px] pl-[4px]">
          <svg width="8" height="20" viewBox="0 0 8 20" fill="#ddd"><path d="M8 0L0 10L8 20Z" /></svg>
        </div>
      </div>
      <div className="h-[49px] border-t-2 border-black flex items-center pl-[19px]">
        <div className="w-[83px] h-[44px] bg-[#3a3a3a] rounded-[3px] flex items-center justify-center text-[#c8c8c8]">指标</div>
        {tabs.map(([t, w, y]) => (
          <div key={t} style={{ width: w }} className={"text-center whitespace-nowrap " + (y ? "text-[#ffffa0]" : "text-[#808080]")}>{t}</div>
        ))}
        <div className="ml-[12px] w-[82px] h-[43px] border border-[#444] flex items-center justify-center text-[#808080]">更多</div>
        <div className="ml-[21px] w-[82px] h-[43px] bg-[#3a3a3a] rounded-[3px] flex items-center justify-center text-[#b8b8b8]">模板</div>
      </div>
      <div className="h-[17px] border-t-2 border-black bg-[linear-gradient(90deg,#0c0c0c_40%,#3c3c3c_50%,#0c0c0c_60%)] flex justify-center">
        <svg width="46" height="12" viewBox="0 0 46 12" fill="#c8c8c8" className="mt-[1px]"><path d="M23 0L46 12H0Z" /></svg>
      </div>
      <div className="h-[23px] border-t-2 border-black bg-[#232323] flex overflow-hidden pl-[10px]">
        {bottomTabs.map(([t, w, a]) => (
          <div key={t} style={{ width: w }} className={"h-[60px] shrink-0 text-center border-r border-[#111] leading-[50px] " + (a ? "bg-[#e85500] text-white" : "text-[#909090]")}>{t}</div>
        ))}
      </div>
      <div className="absolute left-[2784px] top-[112px] w-[1.5px] h-[1468px] bg-[#a8a8a8]"></div>
      <DataWindow />
    </div>
  )
}
